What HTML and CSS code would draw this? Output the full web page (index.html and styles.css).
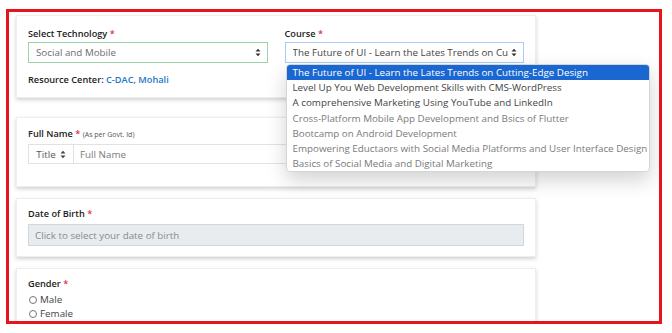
FILE: index.html
```html
<!DOCTYPE html>
<html lang="en">
<head>
    <meta charset="UTF-8">
    <meta name="viewport" content="width=device-width, initial-scale=1.0">
    <title>Registration Form</title>
    <link rel="stylesheet" href="styles.css">
</head>
<body>
    <div class="frame">
        <div class="card card-course">
            <div class="row">
                <div class="field">
                    <label class="label">Select Technology <span class="req">*</span></label>
                    <div class="select valid">
                        <span class="select-text muted">Social and Mobile</span>
                        <svg class="arrows" width="6" height="9" viewBox="0 0 6 9"><path d="M0.5 3.5 L3 0.8 L5.5 3.5 Z M0.5 5.5 L3 8.2 L5.5 5.5 Z" fill="#333"/></svg>
                    </div>
                </div>
                <div class="field course-field">
                    <label class="label">Course <span class="req">*</span></label>
                    <div class="select focused">
                        <span class="select-text">The Future of UI - Learn the Lates Trends on Cutting-Edge Design</span>
                        <svg class="arrows" width="6" height="9" viewBox="0 0 6 9"><path d="M0.5 3.5 L3 0.8 L5.5 3.5 Z M0.5 5.5 L3 8.2 L5.5 5.5 Z" fill="#333"/></svg>
                    </div>
                    <ul class="dropdown">
                        <li class="option selected">The Future of UI - Learn the Lates Trends on Cutting-Edge Design</li>
                        <li class="option">Level Up You Web Development Skills with CMS-WordPress</li>
                        <li class="option">A comprehensive Marketing Using YouTube and LinkedIn</li>
                        <li class="option disabled">Cross-Platform Mobile App Development and Bsics of Flutter</li>
                        <li class="option disabled">Bootcamp on Android Development</li>
                        <li class="option disabled">Empowering Eductaors with Social Media Platforms and User Interface Design</li>
                        <li class="option disabled">Basics of Social Media and Digital Marketing</li>
                    </ul>
                </div>
            </div>
            <p class="resource">Resource Center: <span class="center-name">C-DAC, Mohali</span></p>
        </div>

        <div class="card card-name">
            <label class="label">Full Name <span class="req">*</span> <span class="note">(As per Govt. Id)</span></label>
            <div class="input-group">
                <div class="title-select">
                    <span>Title</span>
                    <svg class="arrows" width="6" height="9" viewBox="0 0 6 9"><path d="M0.5 3.5 L3 0.8 L5.5 3.5 Z M0.5 5.5 L3 8.2 L5.5 5.5 Z" fill="#444"/></svg>
                </div>
                <div class="name-input">Full Name</div>
            </div>
        </div>

        <div class="card card-dob">
            <label class="label">Date of Birth <span class="req">*</span></label>
            <div class="date-input">Click to select your date of birth</div>
        </div>

        <div class="card card-gender">
            <label class="label">Gender <span class="req">*</span></label>
            <div class="radio"><span class="circle"></span>Male</div>
            <div class="radio"><span class="circle"></span>Female</div>
        </div>
    </div>
</body>
</html>
```

FILE: styles.css
```css
* {
    box-sizing: border-box;
}

body {
    margin: 0;
    background-color: #fff;
    font-family: 'Open Sans', 'DejaVu Sans', sans-serif;
    color: #333;
    font-size: 9.8px;
}

.frame {
    margin: 9px 0 0 6px;
    width: 656px;
    height: 315px;
    border: 3px solid #e8141c;
    padding: 3px 0 0 7px;
    overflow: hidden;
}

.card {
    width: 520px;
    background-color: #fff;
    border: 1px solid #eee;
    box-shadow: 0 2px 4px rgba(0, 0, 0, 0.18);
    padding: 11px 11px;
}

.card + .card {
    margin-top: 11px;
}

.card-course {
    position: relative;
    z-index: 2;
    padding-bottom: 10px;
}

.card-name {
    margin-top: 19px !important;
    padding-top: 9px;
    padding-bottom: 22px;
}

.card-dob {
    padding-top: 8px;
    padding-bottom: 10px;
}

.card-gender {
    padding-top: 8px;
    height: 80px;
}

.row {
    display: grid;
    grid-template-columns: 1fr 1fr;
    gap: 17px;
}

.field {
    display: flex;
    flex-direction: column;
    min-width: 0;
}

.course-field {
    position: relative;
}

.label {
    display: block;
    font-weight: 600;
    font-size: 9.2px;
    line-height: 14px;
    color: #222;
}

.req {
    color: #e0313f;
}

.note {
    font-size: 7px;
    font-weight: 400;
    color: #555;
}

.select {
    margin-top: 1px;
    height: 21px;
    display: flex;
    align-items: center;
    padding: 0 6px 0 7px;
    border: 1px solid #ced4da;
    background-color: #fff;
}

.select.valid {
    border-color: #9ad3a6;
}

.select.focused {
    border-color: #a9cdf3;
}

.select-text {
    flex: 1;
    white-space: nowrap;
    overflow: hidden;
    color: #444;
}

.muted {
    color: #6d6d6d;
}

.arrows {
    flex-shrink: 0;
    margin-left: 3px;
}

.dropdown {
    position: absolute;
    top: 37px;
    left: 1px;
    width: 364px;
    margin: 0;
    padding: 0;
    list-style: none;
    background-color: #fff;
    border: 1px solid #d6d6d6;
    border-radius: 4px;
    box-shadow: 0 8px 20px rgba(0, 0, 0, 0.18);
    overflow: hidden;
}

.option {
    height: 15.2px;
    line-height: 15px;
    padding: 0 6px;
    white-space: nowrap;
    color: #444;
}

.option.selected {
    background-color: #1a67d2;
    color: #fff;
}

.option.disabled {
    color: #7a7a7a;
}

.resource {
    margin: 10px 0 0;
    line-height: 14px;
    font-size: 9.2px;
    font-weight: 600;
    color: #222;
}

.center-name {
    color: #2379c6;
}

.input-group {
    margin-top: 2px;
    height: 20px;
    display: flex;
    border: 1px solid #e2e2e2;
}

.title-select {
    width: 45px;
    display: flex;
    align-items: center;
    justify-content: center;
    gap: 4px;
    border-right: 1px solid #e2e2e2;
    color: #555;
}

.title-select .arrows {
    margin-left: 0;
}

.name-input {
    flex: 1;
    display: flex;
    align-items: center;
    padding-left: 6px;
    color: #7a7a7a;
}

.date-input {
    margin-top: 3px;
    height: 22px;
    display: flex;
    align-items: center;
    padding-left: 6px;
    background-color: #e9ecef;
    border: 1px solid #d3d7db;
    color: #8a8a8a;
}

.radio {
    display: flex;
    align-items: center;
    line-height: 14px;
    color: #444;
}

.card-gender .label {
    margin-bottom: 2px;
}

.circle {
    width: 8px;
    height: 8px;
    border: 1px solid #777;
    border-radius: 50%;
    margin: 0 3px 0 1px;
}
```
